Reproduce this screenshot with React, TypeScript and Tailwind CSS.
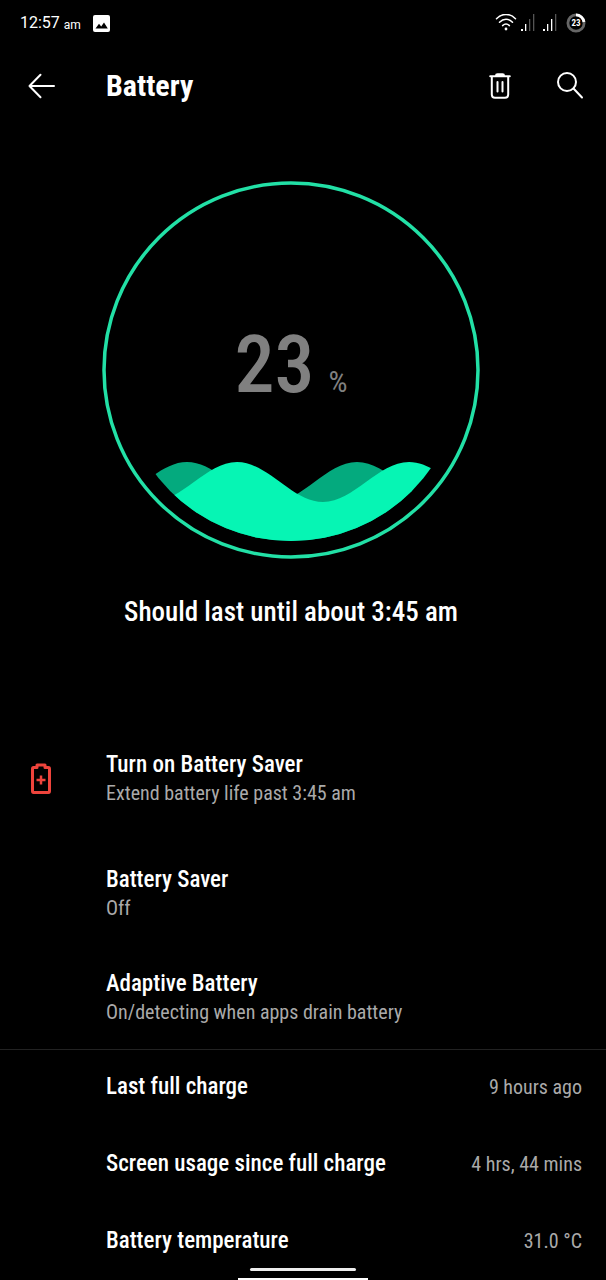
import type { ReactNode } from "react";

const details = [
  { label: "Last full charge", value: "9 hours ago" },
  { label: "Screen usage since full charge", value: "4 hrs, 44 mins" },
  { label: "Battery temperature", value: "31.0 °C" },
];

function SignalIcon({ bars }: { bars: number }) {
  return (
    <svg viewBox="0 0 16 18" className="h-[18px] w-4" aria-hidden>
      {[2, 7, 12, 17].map((h, i) => (
        <rect
          key={h}
          x={i * 4 + 1}
          y={17 - h}
          width={i === 0 ? 2 : 1.3}
          height={h}
          fill={i < bars ? "#fff" : "#555"}
        />
      ))}
    </svg>
  );
}

function StatusBar() {
  return (
    <div className="flex h-[46px] items-center justify-between px-5 font-['Roboto',sans-serif]">
      <div className="flex items-center">
        <span className="text-base">12:57</span>
        <span className="ml-1 pt-1 text-xs">am</span>
        <svg viewBox="0 0 17 17" className="ml-3 h-[17px] w-[17px]" aria-hidden>
          <rect width="17" height="17" rx="2" fill="#fff" />
          <path d="M2.5 13.5 6 8.8l2.2 2.6 2.8-3.9 3.8 6z" fill="#000" />
        </svg>
      </div>
      <div className="flex items-center">
        <svg
          viewBox="0 0 22 18"
          className="h-[18px] w-[22px]"
          fill="none"
          stroke="#fff"
          strokeWidth="1.5"
          strokeLinecap="round"
          aria-hidden
        >
          <path d="M1.5 4.8C7-1.1 15-1.1 20.5 4.8" />
          <path d="M4.5 8.3c4-4.1 9-4.1 13 0" />
          <path d="M7.6 11.6c2.1-2 4.7-2 6.8 0" />
          <circle cx="11" cy="15" r="1.4" fill="#fff" stroke="none" />
        </svg>
        <span className="ml-[3px] flex gap-1.5">
          <SignalIcon bars={2} />
          <SignalIcon bars={3} />
        </span>
        <div className="relative ml-2 flex h-5 w-5 items-center justify-center">
          <svg viewBox="0 0 20 20" className="absolute inset-0 h-5 w-5" fill="none" strokeWidth="2.8" aria-hidden>
            <circle cx="10" cy="10" r="8.1" stroke="#666" />
            <path d="M10 1.9A8.1 8.1 0 0 1 18 9" stroke="#fff" />
          </svg>
          <span className="relative font-['Roboto_Condensed',sans-serif] text-[9px] font-bold leading-none">23</span>
        </div>
      </div>
    </div>
  );
}

function TopBar() {
  return (
    <header className="flex h-20 items-center pl-7 pr-[22px]">
      <button type="button" aria-label="Back" className="flex w-[78px]">
        <svg
          viewBox="0 0 27 26"
          className="h-[26px] w-[27px]"
          fill="none"
          stroke="#fff"
          strokeWidth="2"
          strokeLinecap="round"
          strokeLinejoin="round"
          aria-hidden
        >
          <path d="M26 13H1.5M12.5 1.8 1.5 13l11 11.2" />
        </svg>
      </button>
      <h1 className="text-[30px] font-bold leading-none">Battery</h1>
      <button type="button" aria-label="Delete" className="ml-auto">
        <svg
          viewBox="0 0 22 26"
          className="h-[26px] w-[22px]"
          fill="none"
          stroke="#fff"
          strokeWidth="2"
          strokeLinecap="round"
          aria-hidden
        >
          <path d="M1.2 3.3h19.6M7 2.5Q7 1.2 8.5 1.2h5Q15 1.200 15 2.5M2.800 3.500V21.500q0 3.200 3.200 3.200h10q3.200 0 3.200-3.200V3.500M8.500 9v9.500M13.500 9v9.500" />
        </svg>
      </button>
      <button type="button" aria-label="Search" className="ml-[45px]">
        <svg viewBox="0 0 28 28" className="h-7 w-7" fill="none" stroke="#fff" strokeWidth="2" strokeLinecap="round" aria-hidden>
          <circle cx="11" cy="10" r="9" />
          <path d="m17.5 16.5 8.5 9" />
        </svg>
      </button>
    </header>
  );
}

function BatteryGauge() {
  return (
    <section className="flex flex-col items-center pr-6 pt-[55px]">
      <div className="relative">
        <svg viewBox="0 0 378 378" className="h-[378px] w-[378px]" aria-hidden>
          <clipPath id="tank">
            <circle cx="189" cy="189" r="171" />
          </clipPath>
          <g clipPath="url(#tank)">
            <path
              d="M0 321C31 321 54 281 85 281S139 321 170 321S224 281 255 281S309 321 341 321V378H0Z"
              fill="#04aa7e"
            />
            <path
              d="M49 321C80 321 104 281 135 281S190 321 221 321S276 281 307 281S362 321 393 321V378H0V321Z"
              fill="#06f5b4"
            />
          </g>
          <circle cx="189" cy="189" r="187" fill="none" stroke="#22e0a6" strokeWidth="3.5" />
        </svg>
        <p className="absolute inset-x-0 top-[136px] flex items-baseline justify-center gap-3.5 text-[#808080]">
          <span className="text-[80px] font-medium leading-[96px]">23</span>
          <span className="text-[30px]">%</span>
        </p>
      </div>
      <p className="mt-[33px] text-[27px] font-medium leading-10">Should last until about 3:45 am</p>
    </section>
  );
}

type SettingProps = { title: string; summary: string; icon?: ReactNode };

function Setting({ title, summary, icon }: SettingProps) {
  return (
    <button type="button" className="flex w-full items-center pl-[30px] pr-6 text-left">
      <span className="w-[76px]">{icon}</span>
      <span className="flex flex-col">
        <span className="text-[23px] font-medium leading-7">{title}</span>
        <span className="text-xl leading-7 text-[#aaaaaa]">{summary}</span>
      </span>
    </button>
  );
}

function SaverIcon() {
  return (
    <svg viewBox="0 0 22 32" className="h-8 w-[22px]" fill="none" stroke="#ee443c" strokeWidth="3" aria-hidden>
      <path
        d="M3.5 4.5H7V2h8v2.500h3.500Q19.500 4.500 19.500 6V28q0 1.500-1 1.500h-15q-1 0-1-1.500V6q0-1.500 1-1.500z"
        strokeLinejoin="round"
      />
      <path d="M11 12.500v9M6.500 17h9" strokeWidth="2.5" />
    </svg>
  );
}

export default function App() {
  return (
    <div className="flex min-h-screen flex-col bg-black font-['Roboto_Condensed','DejaVu_Sans_Condensed',sans-serif] text-white">
      <StatusBar />
      <TopBar />
      <main>
        <BatteryGauge />
        <div className="mt-[119px] flex flex-col pb-[23px]">
          <Setting title="Turn on Battery Saver" summary="Extend battery life past 3:45 am" icon={<SaverIcon />} />
          <div className="mt-[59px]">
            <Setting title="Battery Saver" summary="Off" />
          </div>
          <div className="mt-12">
            <Setting title="Adaptive Battery" summary="On/detecting when apps drain battery" />
          </div>
        </div>
        <dl className="flex flex-col gap-[49px] border-t border-[#222222] pl-[106px] pr-6 pt-[23px]">
          {details.map((d) => (
            <div key={d.label} className="flex items-center justify-between leading-7">
              <dt className="text-[23px] font-medium">{d.label}</dt>
              <dd className="text-xl text-[#aaaaaa]">{d.value}</dd>
            </div>
          ))}
        </dl>
      </main>
      <footer className="mt-auto flex flex-col items-center gap-[7px]">
        <div className="h-[3px] w-[106px] rounded-full bg-[#eeeeee]" />
        <div className="h-0.5 w-[130px] bg-white" />
      </footer>
    </div>
  );
}
